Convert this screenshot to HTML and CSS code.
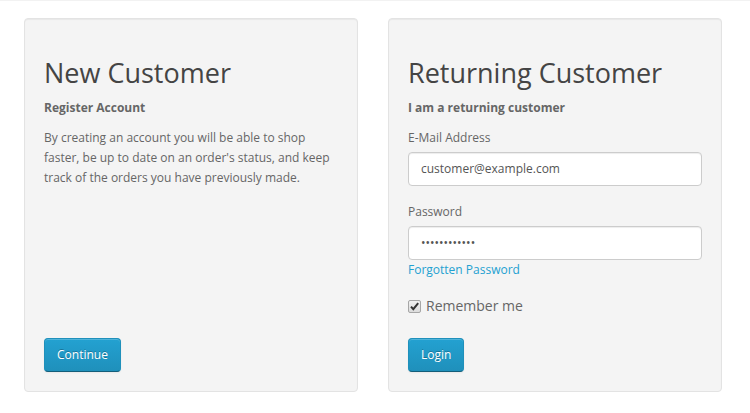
FILE: index.html
```html
<!DOCTYPE html>
<html>
<head>
<meta charset="utf-8">
<link rel="stylesheet" href="styles.css">
</head>
<body>
<div class="page">
  <div class="row">
    <div class="well">
      <h2>New Customer</h2>
      <p><strong>Register Account</strong></p>
      <p>By creating an account you will be able to shop faster, be up to date on an order's status, and keep track of the orders you have previously made.</p>
      <div class="spacer"></div>
      <div><a class="btn" href="#">Continue</a></div>
    </div>
    <div class="well">
      <h2>Returning Customer</h2>
      <p><strong>I am a returning customer</strong></p>
      <div class="form-group">
        <label class="control-label" for="input-email">E-Mail Address</label>
        <input class="form-control" type="text" id="input-email" value="customer@example.com">
      </div>
      <div class="form-group">
        <label class="control-label" for="input-password">Password</label>
        <input class="form-control" type="password" id="input-password" value="customer1234">
        <a class="link" href="#">Forgotten Password</a>
      </div>
      <div class="remember">
        <label class="check">
          <input class="check-input" type="checkbox" checked>
          <span class="box"><svg width="11" height="11" viewBox="0 0 11 11"><path d="M2 5.6 L4.3 8.2 L9.2 2.2" fill="none" stroke="#333" stroke-width="2"/></svg></span>
          Remember me
        </label>
      </div>
      <div><a class="btn" href="#">Login</a></div>
    </div>
  </div>
</div>
<div class="footer"></div>
</body>
</html>
```

FILE: styles.css
```css
html, body {
  margin: 0;
  padding: 0;
  background: #fff;
}
body {
  font-family: "Open Sans", "DejaVu Sans", sans-serif;
  font-size: 12px;
  line-height: 20px;
  color: #666;
}
.page {
  border-top: 1px solid #f2f2f2;
  padding: 17px 28px 0 24px;
}
.row {
  display: flex;
  gap: 30px;
}
.well {
  flex: 0 0 334px;
  box-sizing: border-box;
  display: flex;
  flex-direction: column;
  padding: 19px;
  margin-bottom: 21px;
  background: #f4f4f4;
  border: 1px solid #e3e3e3;
  border-radius: 4px;
  box-shadow: inset 0 1px 1px rgba(0,0,0,0.05);
}
h2 {
  margin: 20px 0 10px;
  font-size: 27px;
  line-height: 1.1;
  font-weight: 400;
  color: #444;
}
p {
  margin: 0 0 10px;
}
strong {
  font-weight: 700;
}
.spacer {
  flex: 1;
}
.form-group {
  margin-bottom: 16px;
}
.control-label {
  display: inline-block;
  margin-bottom: 4px;
}
.form-control {
  display: block;
  box-sizing: border-box;
  width: 100%;
  height: 34px;
  padding: 6px 12px;
  font-family: "Open Sans", "DejaVu Sans", sans-serif;
  font-size: 12px;
  line-height: 20px;
  color: #555;
  background: #fff;
  border: 1px solid #ccc;
  border-radius: 4px;
  box-shadow: inset 0 1px 1px rgba(0,0,0,0.075);
  outline: none;
}
.link {
  color: #23a1d1;
  text-decoration: none;
}
.remember {
  height: 20px;
  margin-bottom: 22px;
}
.check {
  display: flex;
  align-items: center;
  height: 20px;
  font-size: 14px;
  line-height: 20px;
  color: #666;
}
.check-input {
  display: none;
}
.box {
  box-sizing: border-box;
  width: 13px;
  height: 13px;
  margin: 1px 5px 0 0;
  display: flex;
  align-items: center;
  justify-content: center;
  background: linear-gradient(to bottom, #f0f0f0, #dcdcdc);
  border: 1px solid #a6a6a6;
  border-radius: 2px;
}
.box svg {
  display: block;
}
.btn {
  display: inline-block;
  padding: 6px 12px;
  font-size: 12px;
  line-height: 20px;
  color: #fff;
  text-decoration: none;
  text-shadow: 0 -1px 0 rgba(0,0,0,0.25);
  background-color: #229ac8;
  background-image: linear-gradient(to bottom, #23a1d1, #1f90bb);
  border: 1px solid;
  border-color: #1f90bb #1f90bb #145e7a;
  border-radius: 4px;
  box-shadow: inset 0 1px 0 rgba(255,255,255,0.2), 0 1px 2px rgba(0,0,0,0.05);
}
.footer {
  border-top: 1px solid #eee;
  height: 10px;
}
```
